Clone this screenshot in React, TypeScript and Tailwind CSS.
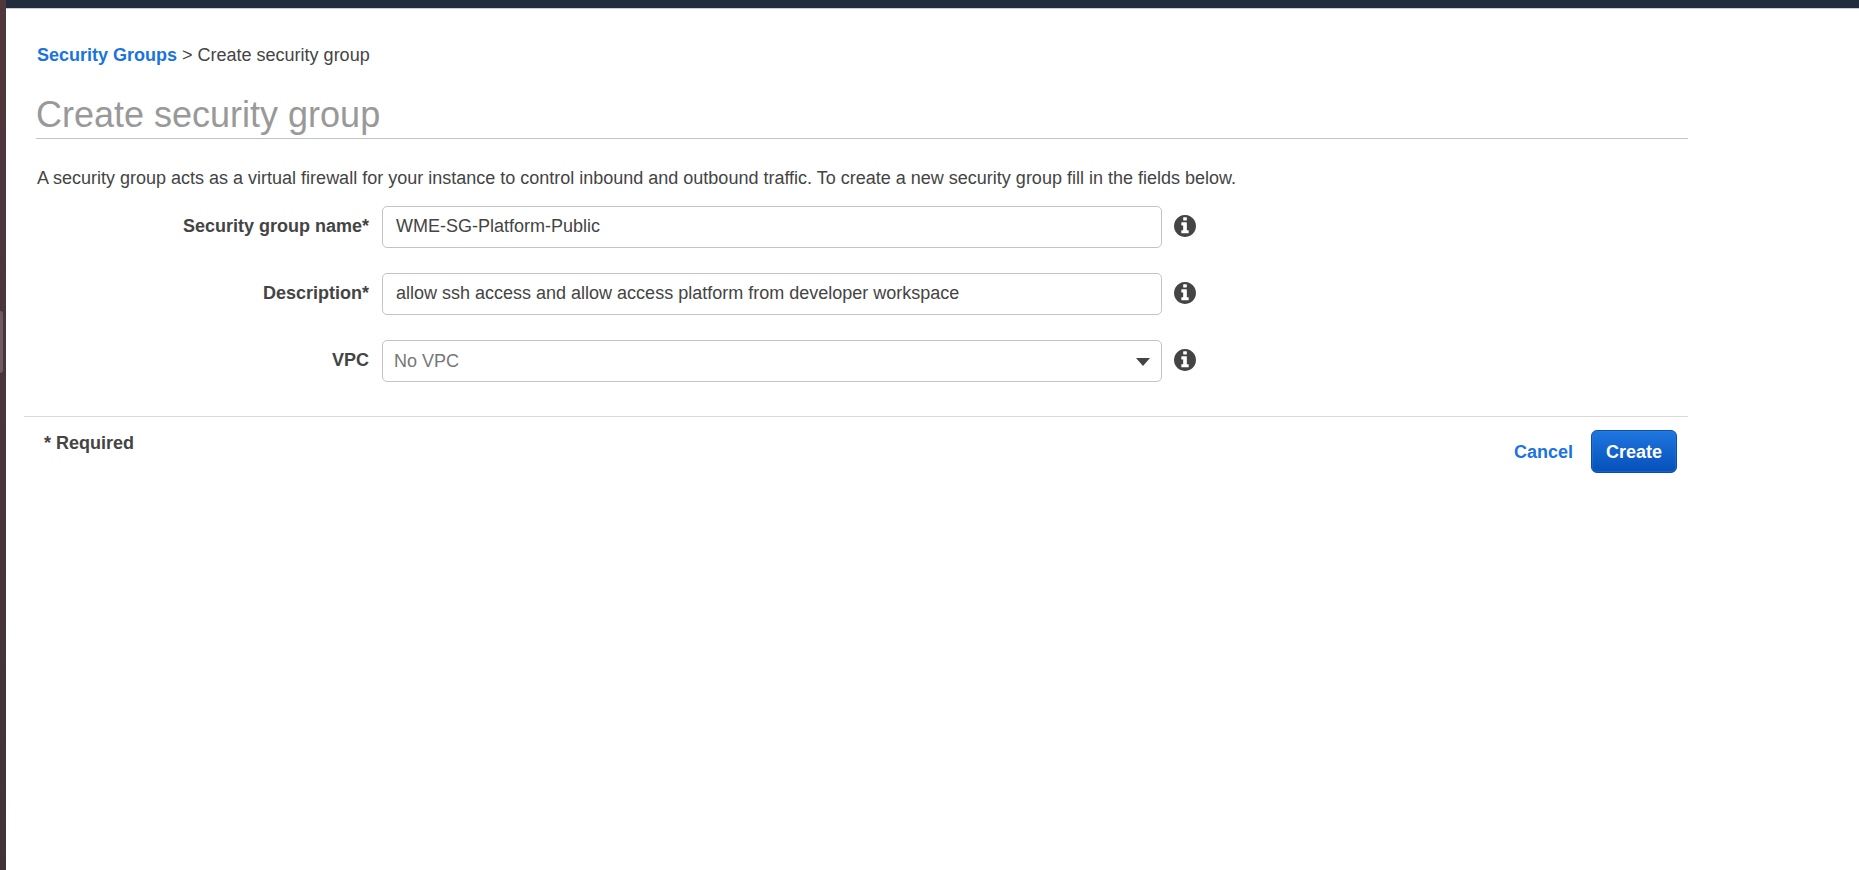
import { useState } from "react";
import type { FormEvent, ReactNode } from "react";

// ─── Icons ────────────────────────────────────────────────────────────────────

function InfoIcon() {
  return (
    <svg viewBox="0 0 1536 1536" className="size-[22px]" aria-hidden="true">
      <path
        fill="currentColor"
        d="M1024 1248v-160q0-14-9-23t-23-9h-96v-512q0-14-9-23t-23-9h-320q-14 0-23 9t-9 23v160q0 14 9 23t23 9h96v320h-96q-14 0-23 9t-9 23v160q0 14 9 23t23 9h448q14 0 23-9t9-23zm-128-896v-160q0-14-9-23t-23-9h-192q-14 0-23 9t-9 23v160q0 14 9 23t23 9h192q14 0 23-9t9-23zm640 416q0 209-103 385.5t-279.5 279.5-385.5 103-385.5-103-279.5-279.5-103-385.5 103-385.5 279.5-279.5 385.5-103 385.5 103 279.5 279.5 103 385.5z"
      />
    </svg>
  );
}

// ─── Form Row ─────────────────────────────────────────────────────────────────

type FieldRowProps = {
  id: string;
  label: string;
  info: string;
  children: ReactNode;
};

function FieldRow({ id, label, info, children }: FieldRowProps) {
  return (
    <div className="flex items-center">
      <label
        htmlFor={id}
        className="w-[333px] shrink-0 pr-[13px] pb-[3px] text-right font-bold"
      >
        {label}
      </label>
      <div className="relative max-w-[780px] flex-1">{children}</div>
      <button type="button" aria-label={info} className="ml-3 shrink-0 pb-[2px]">
        <InfoIcon />
      </button>
    </div>
  );
}

const fieldBase =
  "block h-[42px] w-full rounded-[5px] border border-[#c4c4c4] bg-white outline-none focus:border-[#1a73e0]";

// ─── Page ─────────────────────────────────────────────────────────────────────

export default function App() {
  const [name, setName] = useState("WME-SG-Platform-Public");
  const [description, setDescription] = useState(
    "allow ssh access and allow access platform from developer workspace",
  );
  const [vpc, setVpc] = useState("none");

  const onSubmit = (e: FormEvent) => {
    e.preventDefault();
  };

  return (
    <div className="flex min-h-screen bg-white font-['Liberation_Sans',Arial,sans-serif] text-lg leading-6 text-[#444444]">
      {/* Desktop edge */}
      <div className="w-[6px] shrink-0 bg-linear-to-b from-[#50373c] to-[#42323a] pt-[311px]">
        <div className="h-[62px] w-[3px] rounded-r-[3px] bg-[#6f5a63]" />
      </div>

      <div className="min-w-0 flex-1">
        <header className="h-[9px] border-b border-[#c9ccd0] bg-[#222c3d]" />

        <main className="max-w-[1682px] pl-[18px]">
          <div className="pl-3">
            <nav aria-label="Breadcrumb" className="pt-[34px] pl-px">
              <a href="#" className="font-bold text-[#1a73e0]">
                Security Groups
              </a>{" "}
              &gt; Create security group
            </nav>

            <h1 className="mt-6 border-b border-[#c4c4c4] text-4xl leading-[47px] text-[#999999]">
              Create security group
            </h1>

            <p className="mt-[27px] pl-px">
              A security group acts as a virtual firewall for your instance to
              control inbound and outbound traffic. To create a new security
              group fill in the fields below.
            </p>
          </div>

          <form onSubmit={onSubmit}>
            <div className="mt-4 flex flex-col gap-[25px] pl-[25px]">
              <FieldRow
                id="group-name"
                label="Security group name*"
                info="About the security group name"
              >
                <input
                  id="group-name"
                  type="text"
                  required
                  value={name}
                  onChange={(e) => setName(e.target.value)}
                  className={`${fieldBase} px-[13px] pb-[2px]`}
                />
              </FieldRow>

              <FieldRow
                id="description"
                label="Description*"
                info="About the description"
              >
                <input
                  id="description"
                  type="text"
                  required
                  value={description}
                  onChange={(e) => setDescription(e.target.value)}
                  className={`${fieldBase} px-[13px] pb-[2px]`}
                />
              </FieldRow>

              <FieldRow id="vpc" label="VPC" info="About the VPC">
                <select
                  id="vpc"
                  value={vpc}
                  onChange={(e) => setVpc(e.target.value)}
                  className={`${fieldBase} appearance-none pr-10 pl-[11px] text-[#777777]`}
                >
                  <option value="none">No VPC</option>
                </select>
                <svg
                  viewBox="0 0 14 8"
                  className="pointer-events-none absolute top-[18px] right-3 h-2 w-[14px]"
                  aria-hidden="true"
                >
                  <path d="M0 0h14L7 8z" fill="#444444" />
                </svg>
              </FieldRow>
            </div>

            {/* Actions */}
            <div className="mt-[34px] flex items-start justify-between border-t border-[#d9d9d9] pr-[11px] pl-5">
              <p className="pt-[14px] font-bold">* Required</p>
              <div className="flex items-center gap-[18px] pt-[13px]">
                <button type="button" className="font-bold text-[#1a73e0]">
                  Cancel
                </button>
                <button
                  type="submit"
                  className="h-[43px] rounded-[6px] border border-[#0a4cb0] bg-linear-to-b from-[#1f76df] to-[#0650ba] px-[14px] font-bold text-white inset-shadow-[0_0_1px_1px_#3b82dc66]"
                >
                  Create
                </button>
              </div>
            </div>
          </form>
        </main>
      </div>
    </div>
  );
}
